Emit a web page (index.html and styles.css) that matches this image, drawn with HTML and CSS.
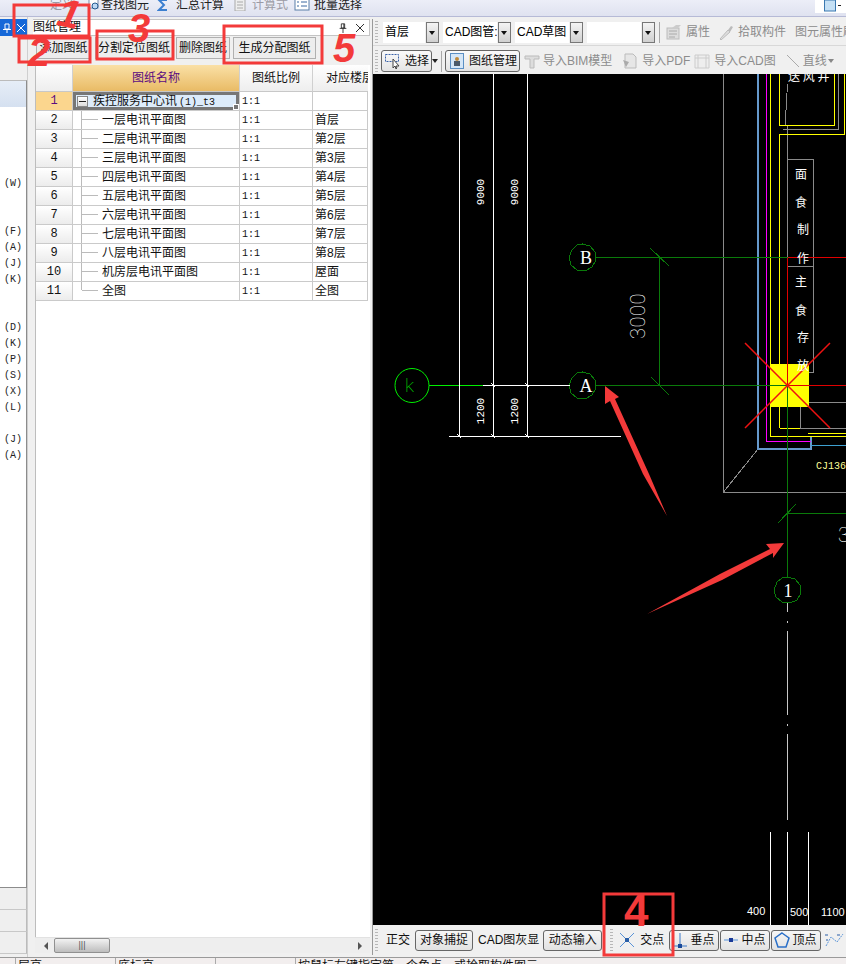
FILE: index.html
```html
<!DOCTYPE html>
<html lang="zh-CN">
<head>
<meta charset="utf-8">
<title>图纸管理</title>
<link rel="stylesheet" href="styles.css">
</head>
<body>
<div class="app">
  <header class="topbar">
    <span class="top-item def"><span class="t-faded">定义</span></span>
    <span class="top-item find"><svg class="ico12" viewBox="0 0 12 12"><rect x="1" y="0" width="9" height="9" fill="#fff" stroke="#7a8ba8"/><circle cx="7" cy="7" r="3" fill="#bcd8f4" stroke="#24598f"/></svg>查找图元</span>
    <span class="top-item sum"><svg class="ico12" viewBox="0 0 12 12"><path d="M10 1H2l5 5-5 5h8" fill="none" stroke="#3b7fd0" stroke-width="2"/></svg>汇总计算</span>
    <span class="top-item calc t-faded"><svg class="ico12" viewBox="0 0 12 12"><rect x="1" y="0" width="10" height="12" fill="#eee" stroke="#aaa"/><path d="M3 3h6M3 6h6M3 9h6" stroke="#aaa"/></svg>计算式</span>
    <span class="top-item batch"><svg class="ico16" viewBox="0 0 16 12"><rect x="1" y="0" width="14" height="11" fill="#fff" stroke="#5a7fa8"/><path d="M3 3h2M3 7h2M7 3h6M7 7h6" stroke="#3a68a0"/></svg>批量选择</span>
    <span class="top-right"><svg class="ico12" viewBox="0 0 12 12"><rect x="0.5" y="0" width="11" height="11" fill="#c5e0f5" stroke="#3a78b0"/></svg><i class="dash"></i></span>
  </header>

  <div class="main">
    <aside class="side">
      <div class="side-tabs">
        <span class="tab-blue"><svg class="ico10" viewBox="0 0 10 10"><path d="M3 1h4v5H3zM1 6.500h8M5 7v3" fill="none" stroke="#fff"/></svg></span>
        <span class="tab-blue"><svg class="ico10" viewBox="0 0 10 10"><path d="M1 1l8 8M9 1l-8 8" stroke="#fff"/></svg></span>
      </div>
      <div class="side-gap"></div>
      <div class="side-box">
        <div class="side-head"></div>
        <ul class="side-list">
          <li>) (W)</li><li></li><li></li>
          <li>) (F)</li><li>) (A)</li><li>) (J)</li><li>) (K)</li><li></li><li></li>
          <li>) (D)</li><li>) (K)</li><li>) (P)</li><li>) (S)</li><li>) (X)</li><li>) (L)</li><li></li>
          <li>) (J)</li><li>) (A)</li>
        </ul>
      </div>
      <div class="side-row"></div>
      <div class="side-row"></div>
      <div class="side-row"></div>
    </aside>

    <section class="panel">
      <div class="panel-title">
        <span>图纸管理</span>
        <span class="panel-ctl">
          <svg class="ico10" viewBox="0 0 10 12"><path d="M3 1h4v5H3zM1 6.500h8M5 7v5M6 1v5" fill="none" stroke="#222"/></svg>
          <svg class="ico10" viewBox="0 0 10 10"><path d="M1 1l8 8M9 1l-8 8" stroke="#333"/></svg>
        </span>
      </div>
      <div class="panel-tools">
        <button class="pbtn w-add">添加图纸</button>
        <button class="pbtn w-split">分割定位图纸</button>
        <button class="pbtn w-del">删除图纸</button>
        <button class="pbtn w-gen">生成分配图纸</button>
      </div>
      <div class="panel-body">
        <table class="grid">
          <colgroup><col class="c-no"><col class="c-name"><col class="c-ratio"><col class="c-floor"></colgroup>
          <thead>
            <tr><th class="h-no"></th><th class="h-name">图纸名称</th><th>图纸比例</th><th class="h-clip">对应楼层</th></tr>
          </thead>
          <tbody>
            <tr class="sel"><td class="no">1</td><td class="name root"><i class="minus"></i>疾控服务中心讯<span class="mono">(1)_t3</span></td><td class="ratio">1:1</td><td></td></tr>
            <tr><td class="no">2</td><td class="name leaf">一层电讯平面图</td><td class="ratio">1:1</td><td>首层</td></tr>
            <tr><td class="no">3</td><td class="name leaf">二层电讯平面图</td><td class="ratio">1:1</td><td>第2层</td></tr>
            <tr><td class="no">4</td><td class="name leaf">三层电讯平面图</td><td class="ratio">1:1</td><td>第3层</td></tr>
            <tr><td class="no">5</td><td class="name leaf">四层电讯平面图</td><td class="ratio">1:1</td><td>第4层</td></tr>
            <tr><td class="no">6</td><td class="name leaf">五层电讯平面图</td><td class="ratio">1:1</td><td>第5层</td></tr>
            <tr><td class="no">7</td><td class="name leaf">六层电讯平面图</td><td class="ratio">1:1</td><td>第6层</td></tr>
            <tr><td class="no">8</td><td class="name leaf">七层电讯平面图</td><td class="ratio">1:1</td><td>第7层</td></tr>
            <tr><td class="no">9</td><td class="name leaf">八层电讯平面图</td><td class="ratio">1:1</td><td>第8层</td></tr>
            <tr><td class="no">10</td><td class="name leaf">机房层电讯平面图</td><td class="ratio">1:1</td><td>屋面</td></tr>
            <tr><td class="no">11</td><td class="name leaf last">全图</td><td class="ratio">1:1</td><td>全图</td></tr>
          </tbody>
        </table>
      </div>
      <div class="hscroll">
        <i class="arr-l"></i>
        <span class="thumb">|||</span>
        <i class="arr-r"></i>
      </div>
    </section>

    <section class="work">
      <div class="bar bar1">
        <i class="grip"></i>
        <span class="combo w56"><span class="combo-text">首层</span><i class="combo-btn"></i></span>
        <span class="combo w68"><span class="combo-text">CAD图管:</span><i class="combo-btn"></i></span>
        <span class="combo w68"><span class="combo-text">CAD草图</span><i class="combo-btn"></i></span>
        <span class="combo w68"><span class="combo-text"></span><i class="combo-btn"></i></span>
        <i class="sep"></i>
        <span class="tool dim gap-prop"><svg class="ico16" viewBox="0 0 16 16"><rect x="1" y="4" width="12" height="11" fill="#ddd" stroke="#bbb"/><path d="M3 7h8M3 10h8M3 13h6" stroke="#aaa"/><path d="M6 4l4-3h5l-3 3z" fill="#ccc"/></svg>属性</span>
        <span class="tool dim gap-pick"><svg class="ico16" viewBox="0 0 16 16"><path d="M2 15l8-9 2 2-9 8z" fill="#ddd" stroke="#bbb"/><path d="M10 6l3-4 2 1-3 5z" fill="#bbb"/></svg>拾取构件</span>
        <span class="tool dim gap-brush">图元属性刷</span>
      </div>
      <div class="bar bar2">
        <i class="grip"></i>
        <span class="tbtn sel-btn"><svg class="ico16" viewBox="0 0 16 16"><rect x="0.500" y="1.500" width="13" height="7" fill="none" stroke="#3b62a8" stroke-dasharray="2 1"/><path d="M8 6v9l2-2 1 3 1-1-1-2h3z" fill="#fff" stroke="#444"/></svg>选择</span>
        <i class="drop"></i>
        <i class="sep sep-tight"></i>
        <span class="tbtn mgr-btn"><svg class="ico16" viewBox="0 0 16 16"><rect x="1.500" y="0.500" width="13" height="15" fill="#d4e6f7" stroke="#5a8fc4"/><rect x="5" y="8" width="6" height="5" fill="#4a5a6a"/><circle cx="8" cy="6" r="2" fill="#c08a3a"/></svg>图纸管理</span>
        <span class="tool dim gap-bim"><svg class="ico16" viewBox="0 0 16 16"><path d="M1 3h14v3h-5v9H6V6H1z" fill="#ddd" stroke="#bbb"/></svg>导入BIM模型</span>
        <span class="tool dim gap-pdf"><svg class="ico16" viewBox="0 0 16 16"><path d="M3 1h8l3 3v11H3z" fill="#e6e6e6" stroke="#bbb"/><path d="M1 7l6 2-3 5z" fill="#aaa"/></svg>导入PDF</span>
        <span class="tool dim gap-cad"><svg class="ico16" viewBox="0 0 16 16"><path d="M1 2h14v13H1z" fill="#eee" stroke="#ccc"/><path d="M4 2v13M12 2v13M1 5h14" stroke="#ccc"/></svg>导入CAD图</span>
        <span class="tool dim gap-line"><svg class="ico16" viewBox="0 0 16 16"><path d="M2 2l12 12" stroke="#aaa"/></svg>直线</span>
        <i class="drop drop-dim"></i>
      </div>

      <svg class="cad" viewBox="373 74 473 851" role="img" aria-label="CAD 图纸">
        <g class="ln-gray">
          <path d="M723.500 74V492H846M723.500 492L758 449"/>
          <path d="M787.500 84L786 110 785 125M783 129H838V74"/>
          <path d="M787.500 125V159.500H813.500V372H787.500M787.500 266H813.500"/>
          <path d="M846 402H800.500V428H846"/>
          <path d="M787.500 159V385"/>
          <path d="M787.500 603V612M787.500 621V623M787.500 631V715M787.500 724V726M787.500 734V820" class="ln-light"/>
        </g>
        <g class="ln-blue"><path d="M758 74V449H811V437"/></g>
        <path class="ln-blue-thin" d="M811 445H846"/>
        <path class="ln-magenta" d="M766.500 74V441H811"/>
        <path class="ln-yellow" d="M770.500 74V436H808M779.500 74V125.500H834.500V74M779.500 428V134.500H844V74M779.500 428H800M808 433H846M808 436H846"/>
        <rect class="fill-yellow" x="771" y="364" width="38" height="43"/>
        <g class="ln-green">
          <path d="M596 257.500H846M596 385.500H846M659.500 257.500V385.500M787.500 385V577M787.500 513.500H846"/>
          <path d="M650 248L669 266M651 377L669 395M778 523L796 504"/>
          <polygon points="582.500,244 590,246 595,252 596,260 592,267 585,271 577,270 571,265 569,257 572,250 577,245"/>
          <polygon points="582.500,372 590,374 595,380 596,388 592,395 585,399 577,398 571,393 569,385 572,378 577,373"/>
          <polygon points="787.500,577 795,579 800,585 801,593 797,600 790,603 782,602 776,597 774,590 777,582 782,578"/>
        </g>
        <path class="ln-red" d="M787.500 385.500H846M787.500 257.500H846M787.500 257.500V385.500"/>
        <path class="ln-red2" d="M745 343L830 428M830 343L745 428"/>
        <circle class="ln-lime" cx="412" cy="385.500" r="17"/>
        <path class="ln-lime" d="M429 385.500H483"/>
        <text class="lime-t" x="405" y="392">k</text>
        <path class="ln-white" d="M459.500 74V436M493.500 74V436M527.500 74V436M449 436.500H621M483 385.500H570"/>
        <path class="ln-white" d="M491 383l4 4M525 383l4 4M457 434l4 4M491 434l4 4M525 434l4 4"/>
        <path class="ln-white" d="M770.500 832V925M787.500 832V925M808.500 832V925"/>
        <text class="t10" transform="translate(484 192) rotate(-90)" text-anchor="middle">9000</text>
        <text class="t10" transform="translate(518 192) rotate(-90)" text-anchor="middle">9000</text>
        <text class="t10" transform="translate(484 411) rotate(-90)" text-anchor="middle">1200</text>
        <text class="t10" transform="translate(518 411) rotate(-90)" text-anchor="middle">1200</text>
        <text class="t18" transform="translate(645 316) rotate(-90)" text-anchor="middle">3000</text>
        <text class="t16" x="586" y="264" text-anchor="middle">B</text>
        <text class="t16" x="586" y="392" text-anchor="middle">A</text>
        <text class="t16" x="788" y="597" text-anchor="middle">1</text>
        <text class="t18" x="838" y="542">3</text>
        <text class="t-cj" x="816" y="469">CJ136</text>
        <text class="t-cn" x="795" y="179">面</text>
        <text class="t-cn" x="795" y="207">食</text>
        <text class="t-cn" x="797" y="234">制</text>
        <text class="t-cn" x="797" y="263">作</text>
        <text class="t-cn" x="795" y="286">主</text>
        <text class="t-cn" x="795" y="315">食</text>
        <text class="t-cn" x="797" y="342">存</text>
        <text class="t-cn" x="797" y="370">放</text>
        <text class="t-cn" x="788" y="81">送 风 井</text>
        <text class="t11" x="747" y="915">400</text>
        <text class="t11" x="790" y="916">500</text>
        <text class="t11" x="821" y="916">1100</text>
      </svg>

      <div class="bar bar3">
        <i class="grip"></i>
        <span class="plain w-ortho">正交</span>
        <span class="sbtn w-snap">对象捕捉</span>
        <span class="plain w-gray">CAD图灰显</span>
        <span class="sbtn w-dyn">动态输入</span>
        <i class="grip grip-2"></i>
        <span class="snap w-cross"><svg class="ico16" viewBox="0 0 16 16"><path d="M1 1l14 14M15 1L1 15" stroke="#5a94d8"/><rect x="6" y="6" width="4" height="4" fill="#2a5fa8"/></svg>交点</span>
        <span class="sbtn snap w-snapbtn"><svg class="ico16" viewBox="0 0 16 16"><path d="M8 1v13M1 14h14" stroke="#3a78c8"/><rect x="6" y="12" width="4" height="4" fill="#1a4a98"/></svg>垂点</span>
        <span class="sbtn snap w-snapbtn"><svg class="ico16" viewBox="0 0 16 16"><path d="M1 8h14" stroke="#5a94d8"/><rect x="6" y="6" width="4" height="4" fill="#1a3a98"/></svg>中点</span>
        <span class="sbtn snap w-snapbtn"><svg class="ico16" viewBox="0 0 16 16"><path d="M8 1l7 5-3 9H4L1 6z" fill="none" stroke="#2a6fc8" stroke-width="1.500"/></svg>顶点</span>
        <svg class="ico24" viewBox="0 0 24 16"><path d="M3 14L8 5l6 5 6-8" fill="none" stroke="#5a94d8" stroke-dasharray="2 1"/><path d="M2 3h3M14 3h3M3 8h2" stroke="#2a5fa8"/></svg>
      </div>
    </section>
  </div>

  <footer class="status">
    <span class="st s1"></span><span class="st s2">层高</span><span class="st s3">底标高</span><span class="st s4"></span><span class="st s5">按鼠标左键指定第一个角点，或拾取构件图元</span>
  </footer>

  <svg class="notes" viewBox="0 0 846 964" aria-hidden="true">
    <g class="note-box">
      <rect x="14" y="5" width="75" height="31"/>
      <rect x="19" y="38" width="71" height="24"/>
      <rect x="97" y="31" width="76" height="28"/>
      <rect x="224" y="26" width="98" height="37"/>
      <rect x="604" y="894" width="69" height="61"/>
    </g>
    <polygon class="note-arrow" points="605,386 619,397 615,399 649,474 667,516 643,474 610,401 605,404"/>
    <polygon class="note-arrow" points="784,543 766,544 770,549 720,574 647,614 722,580 773,553 773,558"/>
    <text class="note-num" x="58" y="27" transform="rotate(12 68 14)">1</text>
    <text class="note-num" x="28" y="66">2</text>
    <text class="note-num" x="128" y="42">3</text>
    <text class="note-num n4" x="624" y="926">4</text>
    <text class="note-num" x="333" y="62">5</text>
  </svg>
</div>
</body>
</html>
```
FILE: styles.css
```css
* { box-sizing: border-box; }
html, body { margin: 0; padding: 0; }
body {
  width: 846px; height: 964px; overflow: hidden;
  font: 12px/1.2 "Liberation Sans", "Noto Sans CJK SC", sans-serif;
  color: #111; background: #f0f0f0;
}
.app { position: relative; width: 846px; height: 964px; display: flex; flex-direction: column; overflow: hidden; }
svg { display: block; flex: none; }
.ico10 { width: 10px; height: 10px; }
.ico12 { width: 12px; height: 12px; }
.ico16 { width: 16px; height: 16px; }
.ico24 { width: 24px; height: 16px; }

/* top toolbar */
.topbar {
  height: 17px; flex: none; display: flex; align-items: flex-start; overflow: hidden;
  background: linear-gradient(#eceef8, #dfe2f0); border-bottom: 1px solid #b6bad6;
  font-size: 12px; color: #222;
}
.top-item { display: flex; align-items: center; gap: 3px; height: 12px; line-height: 12px; margin-top: -1px; }
.def { margin-left: 50px; width: 38px; }
.find { width: 69px; }
.find svg { margin-right: -2px; }
.sum { width: 77px; }
.sum svg { margin-right: 4px; }
.calc { width: 60px; }
.calc svg { margin-right: 3px; }
.batch { width: 90px; gap: 4px; }
.t-faded { color: #9b9ba5; }
.top-right { margin-left: auto; width: 31px; height: 13px; background: #fff; padding-left: 9px; display: flex; gap: 2px; align-items: flex-start; }
.dash { width: 3px; height: 1px; background: #222; margin-top: 5px; }

.main { flex: none; height: 940px; display: flex; }

/* left dock */
.side { width: 28px; flex: none; display: flex; flex-direction: column; background: #f0f0f0; border-right: 1px solid #cfcfcf; }
.side-tabs { height: 17px; margin-top: 2px; display: flex; gap: 1px; flex: none; }
.tab-blue { width: 13px; background: #1668d8; display: flex; align-items: center; justify-content: center; }
.side-gap { height: 44px; flex: none; }
.side-box { flex: none; height: 808px; width: 27px; background: #fff; border: 1px solid #8c8c8c; border-left: 0; border-top-color: #bbb; overflow: hidden; }
.side-head { height: 26px; background: linear-gradient(#e6edf7, #d5e0f0); }
.side-list { list-style: none; margin: 69px 0 0; padding: 0; }
.side-list li { height: 16px; display: flex; justify-content: flex-end; padding-right: 4px; font: 10px/16px "Liberation Mono", monospace; white-space: pre; color: #222; }

.side-row { height: 22px; flex: none; border-bottom: 1px solid #c8c8c8; background: #efefef; border-right: 1px solid #bbb; width: 27px; }

/* panel */
.panel { width: 345px; flex: none; display: flex; flex-direction: column; margin: 2px 0; padding-left: 5px; padding-right: 2px; background: #f0f0f0; border-right: 1px solid #9a9a9a; }
.panel-title { height: 17px; flex: none; display: flex; justify-content: space-between; align-items: center; background: #fff; border: 1px solid #c4c4c4; border-left: 0; padding-right: 4px; font-size: 12px; color: #111; }
.panel-ctl { display: flex; gap: 7px; align-items: center; }
.panel-tools { height: 27px; flex: none; display: flex; align-items: flex-start; padding: 1px 0 0 3px; gap: 3px; }
.pbtn { height: 22px; padding: 0; font: inherit; color: #111; background: #ededed; border: 1px solid #b0b0b0; text-align: center; }
.w-add { width: 55px; }
.w-split { width: 78px; margin-left: 1px; }
.w-del { width: 54px; }
.w-gen { width: 83px; }
.panel-body { flex: 1; min-height: 0; background: #fff; border-left: 1px solid #bdbdbd; margin-top: 2px; margin-left: 2px; overflow: hidden; }
.grid { border-collapse: separate; border-spacing: 0; table-layout: fixed; width: 332px; }
.c-no { width: 37px; } .c-name { width: 167px; } .c-ratio { width: 73px; } .c-floor { width: 55px; }
.grid th { height: 27px; padding: 0; font-weight: 400; font-size: 12px; background: linear-gradient(#fefefe, #eeeeee); border-right: 1px solid #d0d0d0; border-bottom: 1px solid #c8c8c8; overflow: hidden; white-space: nowrap; }
.grid .h-name { background: linear-gradient(#fae0a6, #e9bb65); color: #5b0c80; }
.grid .h-clip { text-align: left; padding-left: 13px; border-right: 0; }
.grid td { height: 19px; padding: 1px 0 0 2px; border-right: 1px solid #cacaca; border-bottom: 1px solid #cacaca; white-space: nowrap; overflow: hidden; font-size: 12px; line-height: 17px; }
.grid .no { padding: 0; text-align: center; font: 12px/18px "Liberation Mono", monospace; background: linear-gradient(#fff, #ececec); }
.grid .ratio { font-family: "Liberation Mono", monospace; font-size: 10px; }
.mono { font: 10px "Liberation Mono", monospace; margin-left: 2px; }
.grid .sel .no { background: #fbd68e; color: #5b0c80; }
.name { position: relative; }
.grid .root { background: #dcebfa; box-shadow: inset 0 0 0 3px #777; padding-left: 20px; }
.root::after { content: ""; position: absolute; right: 0; bottom: 0; width: 4px; height: 4px; background: #777; border: 1px solid #fff; }
.minus { position: absolute; left: 4px; top: 4px; width: 11px; height: 11px; background: linear-gradient(#fff, #ddd); border: 1px solid #888; }
.minus::after { content: ""; position: absolute; left: 1px; right: 1px; top: 4px; height: 1px; background: #222; }
.grid .leaf { padding-left: 29px; }
.leaf::before { content: ""; position: absolute; left: 8px; top: 0; bottom: 0; border-left: 1px solid #bbb; }
.leaf::after { content: ""; position: absolute; left: 9px; top: 8px; width: 16px; border-top: 1px solid #bbb; }
.last::before { bottom: 10px; }
.hscroll { height: 16px; flex: none; margin: 0 0 2px 2px; display: flex; align-items: center; background: #eee; border-top: 1px solid #e2e2e2; padding: 0 3px 0 9px; }
.arr-l { width: 0; height: 0; border: 4px solid transparent; border-right: 4px solid #555; border-left: 0; }
.arr-r { width: 0; height: 0; border: 4px solid transparent; border-left: 4px solid #555; border-right: 0; margin-left: auto; margin-right: 5px; }
.thumb { width: 56px; height: 15px; margin-left: 6px; background: linear-gradient(#f2f2f2, #bdbdbd); border: 1px solid #909090; border-radius: 2px; text-align: center; font-size: 9px; line-height: 13px; color: #555; }

/* work area */
.work { flex: 1; min-width: 0; display: flex; flex-direction: column; background: #f0f0f0; }
.bar { flex: none; display: flex; align-items: center; background: #f0f0f0; white-space: nowrap; overflow: hidden; }
.bar1 { height: 29px; padding-top: 2px; border-bottom: 1px solid #d8d8d8; }
.bar2 { height: 28px; padding-top: 2px; }
.bar3 { height: 32px; padding-bottom: 2px; }
.grip { width: 3px; height: 22px; margin-left: 2px; flex: none; background: repeating-linear-gradient(#b8b8b8 0 1px, transparent 1px 3px); }
.grip-2 { margin-left: 8px; }
.combo { height: 21px; display: flex; flex: none; align-items: stretch; margin-left: 4px; }
.bar1 .grip + .combo { margin-left: 5px; }
.combo-text { flex: 1; min-width: 0; background: #fff; padding: 0 2px; line-height: 20px; font-size: 12px; color: #000; overflow: hidden; }
.combo-btn { position: relative; width: 13px; flex: none; margin-left: 1px; background: linear-gradient(#f4f4f4, #d0d0d0); border: 1px solid #777; }
.combo-btn::after { content: ""; position: absolute; left: 2px; top: 8px; border: 3.500px solid transparent; border-top: 4px solid #111; border-bottom: 0; }
.w56 { width: 56px; }
.w68 { width: 68px; }
.sep { width: 1px; height: 21px; flex: none; background: #a8a8a8; margin-left: 4px; }
.sep-tight { margin-left: 2px; }
.tool { display: flex; align-items: center; gap: 4px; flex: none; }
.dim { color: #8c8c8c; }
.gap-prop { margin-left: 6px; }
.gap-pick { margin-left: 8px; }
.gap-brush { margin-left: 9px; }
.tbtn { display: flex; align-items: center; gap: 4px; height: 22px; flex: none; background: linear-gradient(#fafafa, #e4e4e4); border: 1px solid #666; border-radius: 3px; }
.sel-btn { width: 51px; margin-left: 3px; padding-left: 3px; }
.mgr-btn { width: 75px; margin-left: 3px; padding-left: 3px; }
.drop { position: relative; width: 7px; height: 6px; flex: none; }
.drop::after { content: ""; position: absolute; left: 0; top: 1px; border: 3.500px solid transparent; border-top: 4px solid #222; border-bottom: 0; }
.drop-dim { margin-left: 1px; }
.drop-dim::after { border-top-color: #888; }
.gap-bim { margin-left: 4px; gap: 3px; }
.gap-pdf { margin-left: 10px; }
.gap-cad { margin-left: 4px; }
.gap-line { margin-left: 9px; gap: 2px; }

.cad { width: 473px; height: 851px; flex: none; background: #000; }
.cad path, .cad polygon, .cad circle { fill: none; shape-rendering: crispEdges; }
.cad .fill-yellow { fill: #ffff00; }
.ln-gray path { stroke: #8a8a8a; }
.cad .ln-light { stroke: #c8c8c8; }
.ln-blue path { stroke: #6699cc; stroke-width: 2; }
.ln-blue-thin { stroke: #3ea0d0; }
.ln-magenta { stroke: #ff00ff; }
.ln-yellow { stroke: #ffff00; }
.ln-green path, .ln-green polygon { stroke: #0a7a0a; }
.ln-red { stroke: #e00000; }
.ln-red2 { stroke: #ee1111; stroke-width: 1.500; }
.cad .ln-red2 { shape-rendering: auto; }
.ln-lime { stroke: #00ee00; }
.cad circle.ln-lime { shape-rendering: auto; stroke-width: 1; }
.ln-white { stroke: #fff; }
.cad text { fill: #fff; font-family: "Liberation Mono", "Noto Sans CJK SC", monospace; }
.cad .t10 { font-size: 11px; }
.cad .t11 { font-size: 11px; font-family: "Liberation Sans", sans-serif; }
.cad .t16 { font-size: 18px; font-family: "Liberation Serif", serif; }
.cad .t18 { font-size: 20px; font-family: Roboto, "Liberation Sans", sans-serif; font-weight: 100; letter-spacing: 0.500px; }
.cad .lime-t { fill: #00ee00; font-size: 19px; font-family: Roboto, "Liberation Sans", sans-serif; font-weight: 100; }
.cad .t-cj { fill: #ffff99; font-size: 10px; }
.cad .t-cn { font-family: "Noto Sans CJK SC", sans-serif; font-size: 12px; }

.plain { flex: none; color: #111; }
.sbtn { flex: none; height: 21px; line-height: 19px; text-align: center; background: linear-gradient(#f6f6f6, #e2e2e2); border: 1px solid #666; border-radius: 3px; color: #111; }
.w-ortho { margin-left: 8px; }
.w-snap { width: 58px; margin-left: 5px; }
.w-gray { margin-left: 5px; }
.w-dyn { width: 59px; margin-left: 4px; }
.snap { display: flex; align-items: center; gap: 2px; }
.w-cross { margin-left: 6px; gap: 5px; }
.w-snapbtn { width: 50px; margin-left: 1px; padding-left: 2px; }
.w-cross + .w-snapbtn { margin-left: 5px; }
.ico24 { margin-left: 2px; }

.status { flex: none; height: 7px; display: flex; background: #f2eeee; border-top: 1px solid #9a9a9a; overflow: hidden; line-height: 17px; font-size: 12px; }
.st { flex: none; border-right: 1px solid #aaa; padding-left: 2px; }
.s1 { width: 16px; padding: 0; }
.s2 { width: 100px; }
.s3 { width: 100px; }
.s4 { width: 80px; }
.s5 { flex: 1; border-right: 0; }

/* red hand-drawn annotations over the screenshot */
.notes { position: absolute; left: 0; top: 0; width: 846px; height: 964px; pointer-events: none; }
.note-box rect { fill: none; stroke: #f33a3a; stroke-width: 3; }
.note-arrow { fill: #f33a3a; }
.note-num { fill: #f33a3a; font: italic 700 40px "Liberation Sans", sans-serif; }
.note-num.n4 { font-size: 44px; font-style: normal; }
```
